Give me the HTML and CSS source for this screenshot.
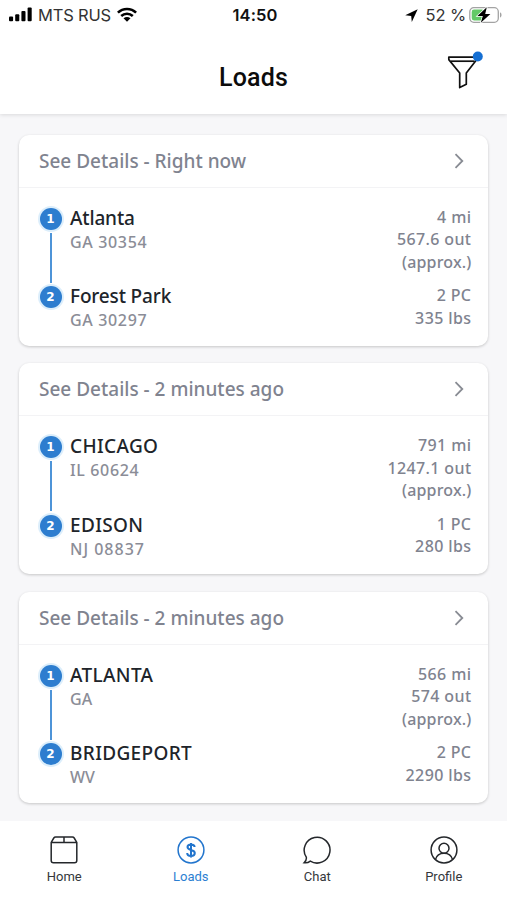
FILE: index.html
```html
<!DOCTYPE html>
<html lang="en">
<head>
<meta charset="utf-8">
<meta name="viewport" content="width=device-width, initial-scale=1">
<title>Loads</title>
<link rel="stylesheet" href="styles.css">
</head>
<body>
<div class="app">
  <header class="top">
    <div class="status">
      <div class="carrier">
        <svg width="24" height="16" viewBox="0 0 24 16"><rect x="0" y="9.6" width="4.1" height="4.6" rx="1"/><rect x="6.2" y="7.3" width="4.1" height="6.9" rx="1"/><rect x="12.4" y="4" width="4.1" height="10.2" rx="1"/><rect x="18.6" y="0.4" width="4.1" height="13.8" rx="1"/></svg>
        <span class="carrier-name">MTS RUS</span>
        <svg width="20" height="16" viewBox="0 0 20 16"><g fill="none" stroke="#000" stroke-width="2.5"><path d="M.9 5.7C6 .6 14 .6 19.100 5.700"/><path d="M4.200 9C7.500 5.900 12.500 5.900 15.800 9"/></g><path d="M6.500 11.300Q10 8.700 13.500 11.300L10 14.800Z"/></svg>
      </div>
      <time class="clock">14:50</time>
      <div class="power">
        <svg class="location" width="13" height="13" viewBox="0 0 13 13"><path d="M12.700.2.200 6.200l6 .8 .6 6Z"/></svg>
        <span class="percent">52 %</span>
        <svg width="33" height="18" viewBox="0 0 33 18"><rect x=".8" y="1.700" width="28.500" height="14.600" rx="4" fill="#fff" stroke="#a3a3a3" stroke-width="1.300"/><rect x="2.700" y="3.600" width="12.500" height="10.800" rx="2.300" fill="#63c967"/><path d="M31 6.300q1.600.8 1.600 2.700T31 11.700Z" fill="#a3a3a3"/><path d="M17.800 1.200 8.400 10h5.400l-2 6.800L21.400 8h-5.200Z" stroke="#fff" stroke-width="1.500" paint-order="stroke"/></svg>
      </div>
    </div>
    <div class="titlebar">
      <h1>Loads</h1>
      <svg class="filter" width="36" height="40" viewBox="0 0 36 40"><g fill="none" stroke="#111" stroke-width="1.700" stroke-linejoin="round"><path d="M1.800 6.200h27.400v3.100L19.300 22v11.200L12.700 36.500V22L1.800 8.600Z"/><path d="M3.800 10.200h23.800"/></g><circle cx="30.800" cy="5.500" r="5" fill="#156fd3"/></svg>
    </div>
  </header>

  <main class="list">
    <article class="card">
      <div class="card-head"><span>See Details - Right now</span><svg class="chevron" width="10" height="16" viewBox="0 0 10 16"><path d="M1.500 1.200 8.300 8l-6.800 6.800"/></svg></div>
      <div class="card-body">
        <div class="stop first"><b class="pin">1</b><div class="place"><h2>Atlanta</h2><p class="zip">GA 30354</p></div><div class="facts"><span>4 mi</span><span>567.6 out</span><span class="approx">(approx.)</span></div></div>
        <div class="stop"><b class="pin">2</b><div class="place"><h2>Forest Park</h2><p class="zip">GA 30297</p></div><div class="facts"><span>2 PC</span><span>335 lbs</span></div></div>
      </div>
    </article>
    <article class="card">
      <div class="card-head"><span>See Details - 2 minutes ago</span><svg class="chevron" width="10" height="16" viewBox="0 0 10 16"><path d="M1.500 1.200 8.300 8l-6.800 6.800"/></svg></div>
      <div class="card-body">
        <div class="stop first"><b class="pin">1</b><div class="place"><h2 class="caps">CHICAGO</h2><p class="zip">IL 60624</p></div><div class="facts"><span>791 mi</span><span>1247.1 out</span><span class="approx">(approx.)</span></div></div>
        <div class="stop"><b class="pin">2</b><div class="place"><h2 class="caps">EDISON</h2><p class="zip loose">NJ 08837</p></div><div class="facts"><span>1 PC</span><span>280 lbs</span></div></div>
      </div>
    </article>
    <article class="card">
      <div class="card-head"><span>See Details - 2 minutes ago</span><svg class="chevron" width="10" height="16" viewBox="0 0 10 16"><path d="M1.500 1.200 8.300 8l-6.800 6.800"/></svg></div>
      <div class="card-body">
        <div class="stop first"><b class="pin">1</b><div class="place"><h2 class="caps">ATLANTA</h2><p>GA</p></div><div class="facts"><span>566 mi</span><span>574 out</span><span class="approx">(approx.)</span></div></div>
        <div class="stop"><b class="pin">2</b><div class="place"><h2 class="caps">BRIDGEPORT</h2><p>WV</p></div><div class="facts"><span>2 PC</span><span>2290 lbs</span></div></div>
      </div>
    </article>
  </main>

  <nav class="tabs">
    <a class="tab"><svg width="30" height="30" viewBox="0 0 30 30"><path d="M2.200 7.400V25.500q0 2.300 2.300 2.300h21q2.300 0 2.300-2.300V7.400L25.200 3q-.6-.9-1.800-.9H6.600Q5.400 2.100 4.800 3ZM2.200 7.400h25.600M15 2.100v5.300"/></svg><span>Home</span></a>
    <a class="tab active"><svg width="30" height="30" viewBox="0 0 30 30"><circle cx="15" cy="15" r="12.900"/><path class="dollar" d="M18.600 12.100c0-1.700-1.500-2.700-3.600-2.700s-3.500 1-3.500 2.700 1.300 2.300 3.500 2.900 3.800 1.200 3.800 3-1.600 2.900-3.800 2.900-3.800-1-3.800-2.900M15 7.900v14.600"/></svg><span>Loads</span></a>
    <a class="tab"><svg width="30" height="30" viewBox="0 0 30 30"><path d="M4.300 22.200A12.900 12.900 0 1 1 8.300 26.100Q5.500 28.300 2.100 27.700 4.800 25.300 4.300 22.200Z"/></svg><span>Chat</span></a>
    <a class="tab"><svg width="30" height="30" viewBox="0 0 30 30"><circle cx="15" cy="15" r="12.900"/><circle cx="15" cy="13.200" r="5"/><path d="M6.400 24.600C7.500 20.500 11 18.200 15 18.200s7.500 2.300 8.600 6.400"/></svg><span>Profile</span></a>
  </nav>
</div>
</body>
</html>
```

FILE: styles.css
```css
* { box-sizing: border-box; }
body { margin: 0; background: #f7f7f9; font-family: "Noto Sans", sans-serif; }
h1, h2, p { margin: 0; }
svg { display: block; flex: none; }
.app { width: 507px; height: 900px; display: flex; flex-direction: column; overflow: hidden; }
.top { height: 114px; flex: none; background: #fff; box-shadow: 0 1px 4px rgba(0, 0, 0, .12); }
.status { height: 30px; padding: 0 6px 0 9px; display: grid; grid-template-columns: 1fr auto 1fr; align-items: center; font: 400 16.5px/30px Inter, sans-serif; color: #333; }
.carrier, .power { display: flex; align-items: center; }
.carrier-name { margin: 0 6px 0 5px; letter-spacing: -.2px; }
.clock { font-weight: 600; color: #111; letter-spacing: .1px; }
.power { justify-content: flex-end; margin-right: -1px; }
.location { margin-right: 7px; }
.percent { margin-right: 3px; letter-spacing: -.1px; }
.titlebar { height: 84px; padding: 21px 24px 0 60px; display: flex; align-items: flex-start; justify-content: space-between; }
h1 { flex: 1; text-align: center; margin-top: 12px; font: 500 25px/30px Roboto, sans-serif; letter-spacing: .2px; color: #0c0c0c; }
.list { flex: 1; padding: 20.500px 19px 0; display: flex; flex-direction: column; gap: 17.400px; }
.card { height: 211.300px; flex: none; background: #fff; border-radius: 10px; box-shadow: 0 1px 3px rgba(0, 0, 0, .2); }
.card-head { height: 53px; padding: 0 24.500px 0 20px; display: flex; align-items: center; justify-content: space-between; border-bottom: 1px solid #f3f3f5; font-size: 19px; font-weight: 500; color: #80838f; }
.chevron { fill: none; stroke: #888b93; stroke-width: 1.800; }
.card-body { padding: 18px 17px 0 20px; }
.stop { display: flex; align-items: flex-start; position: relative; }
.stop.first { height: 78.500px; }
.stop.first::before { content: ""; position: absolute; left: 11px; top: 27px; width: 1.500px; height: 50px; background: #4d94d8; }
.pin { width: 22px; height: 22px; margin: 2px 0 0 .5px; border-radius: 50%; background: #2d7dcf; box-shadow: 0 0 0 2px #dceefb; color: #fff; font: 700 12px/22px "DejaVu Sans", sans-serif; text-align: center; }
.place { flex: 1; margin-left: 8.500px; }
h2 { font-size: 19px; line-height: 25px; font-weight: 500; letter-spacing: -.15px; color: #20242a; }
h2.caps { letter-spacing: .35px; }
.place p { font-size: 16px; line-height: 23px; font-weight: 500; color: #8b8d97; }
.place .zip { letter-spacing: .65px; }
.place .loose { letter-spacing: 1px; }
.facts { display: flex; flex-direction: column; align-items: flex-end; margin-right: -.4px; font-size: 16px; line-height: 22.500px; font-weight: 500; letter-spacing: .38px; color: #80838f; }
.facts .approx { letter-spacing: .15px; }
.tabs { height: 79px; flex: none; padding-left: 1px; display: grid; grid-template-columns: repeat(4, 1fr); background: #fff; }
.tab { padding-top: 14px; display: flex; flex-direction: column; align-items: center; color: #34373b; font: 400 13px/18px Roboto, sans-serif; }
.tab svg { fill: none; stroke: #24272b; stroke-width: 1.500; }
.tab span { margin-top: 3px; }
.tab.active { color: #2c7fd2; }
.tab.active svg { stroke: #2275cd; }
.tab .dollar { stroke-width: 2; }
```
